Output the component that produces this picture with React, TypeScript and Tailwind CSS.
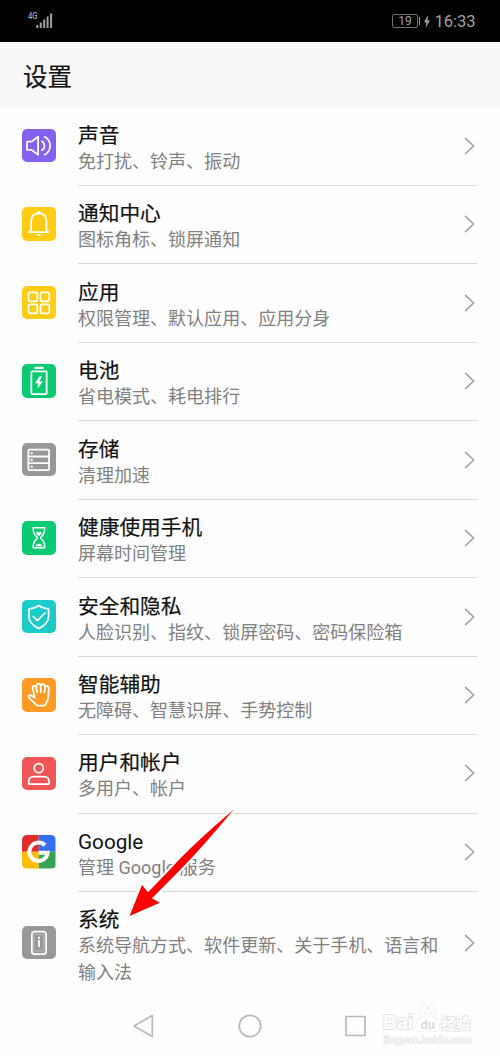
import type { ReactNode } from 'react';

type Setting = {
  title: string;
  detail: ReactNode;
  color: string;
  icon: ReactNode;
};

const settings: Setting[] = [
  {
    title: '声音',
    detail: '免打扰、铃声、振动',
    color: 'bg-[#8561f0]',
    icon: (
      <>
        <path d="M5.500 12.800h4.200l6.600-5v18.400l-6.600-5H5.500Q5 21.200 5 20.500v-7q0-.7.500-.7Z" />
        <path d="M20.200 12.500q1.300.5 2 2 1.200 2.500 0 5-.7 1.500-2 2M23 8q2.500.8 4.300 4 2.500 5 0 10-1.800 3.200-4.300 4" />
      </>
    ),
  },
  {
    title: '通知中心',
    detail: '图标角标、锁屏通知',
    color: 'bg-[#ffcc14]',
    icon: (
      <>
        <path d="M7.300 25.500Q9.200 24.500 9.200 22.500V15q0-8.500 7.800-8.500t7.800 8.500v7.500q0 2 1.900 3ZM15.800 5.600q1.200-1.400 2.400 0" />
        <path d="M14.600 27.500h4.800q-.7 2-2.400 2t-2.400-2Z" fill="white" stroke="none" />
      </>
    ),
  },
  {
    title: '应用',
    detail: '权限管理、默认应用、应用分身',
    color: 'bg-[#ffcc14]',
    icon: (
      <>
        <rect x="6.500" y="6.500" width="9" height="9" rx="2" />
        <rect x="18.700" y="6.500" width="9" height="9" rx="2" />
        <rect x="6.500" y="18.700" width="9" height="9" rx="2" />
        <rect x="18.700" y="18.700" width="9" height="9" rx="2" />
      </>
    ),
  },
  {
    title: '电池',
    detail: '省电模式、耗电排行',
    color: 'bg-[#0acb72]',
    icon: (
      <>
        <rect x="9.500" y="7.500" width="15.500" height="23" rx="0.8" />
        <path d="M13.500 4h7.500" strokeWidth="2.200" />
        <path d="m17.700 12.500-4.500 7h3l-.4 5.500 5.300-7.300H18l2.200-5.200Z" fill="white" stroke="none" />
      </>
    ),
  },
  {
    title: '存储',
    detail: '清理加速',
    color: 'bg-[#989898]',
    icon: (
      <>
        <rect x="6.500" y="6.800" width="21" height="20.700" rx="1" />
        <path d="M6.500 13.700h21M6.500 20.500h21" />
        <path d="M9.500 10.300h.8M9.500 17.100h.8M9.500 24h.8" />
      </>
    ),
  },
  {
    title: '健康使用手机',
    detail: '屏幕时间管理',
    color: 'bg-[#0acb72]',
    icon: (
      <>
        <path d="M11.300 6.800h11.800q0 6.500-3.800 9.300-1 .9 0 1.800 3.800 2.800 3.800 9.300H11.300q0-6.500 3.800-9.300 1-.9 0-1.800-3.800-2.800-3.800-9.300Z" strokeWidth="1.500" />
        <path d="M14.200 11.500q1.500-1.400 3 .3 1.500-1.700 3-.3 0 2.200-3 4-3-1.800-3-4ZM13.300 25.500q3.900-4.600 7.800 0Z" fill="white" stroke="none" />
      </>
    ),
  },
  {
    title: '安全和隐私',
    detail: '人脸识别、指纹、锁屏密码、密码保险箱',
    color: 'bg-[#1bcbc8]',
    icon: (
      <>
        <path d="M17 5.500q4 3.200 9.500 3.500.5 0 .5.800v6.700q0 7.500-10 12.500Q7 24 7 16.500V9.800q0-.8.500-.8Q13 8.700 17 5.500Z" />
        <path d="m11.500 16.800 4.200 4.200 7.500-7.800" />
      </>
    ),
  },
  {
    title: '智能辅助',
    detail: '无障碍、智慧识屏、手势控制',
    color: 'bg-[#ff9a24]',
    icon: (
      <>
        <path d="M12.800 20 10.800 10.500Q10.500 8.300 12.200 8T14.500 9.500Q14.500 6 16.500 5.800T19 8Q19.300 6 21.200 6.200T23.300 9Q24 8 25.600 8.300T27.300 10.500L26.500 20Q26.300 24 23.500 27.500 23 28 22 28H16.500Q15.300 28 14.300 27L7.500 20.500Q6 18.500 7.200 17.500 8.500 16.800 10.300 18.300L12.800 20" />
        <path d="m14.500 9.500.9 5.200M19 8v6.200M23.300 9l-.5 5.700" />
      </>
    ),
  },
  {
    title: '用户和帐户',
    detail: '多用户、帐户',
    color: 'bg-[#f25555]',
    icon: (
      <>
        <circle cx="17" cy="11.300" r="4.600" />
        <path d="M6.800 27v-1.800q0-5.200 5.200-5.200h10q5.500 0 5.500 5.200V27q0 .6-.6.600H7.400q-.6 0-.6-.6Z" />
      </>
    ),
  },
  {
    title: 'Google',
    detail: '管理 Google 服务',
    color: 'bg-white',
    icon: (
      <>
        <g stroke="none">
          <path d="M0 0h17v17H0Z" fill="#e12b2a" />
          <path d="M17 0h17v17H17Z" fill="#3370ef" />
          <path d="M0 17h17v17H0Z" fill="#fdbd08" />
          <path d="M17 17h17v17H17Z" fill="#34a352" />
        </g>
        <path d="M23.300 10.400A9.300 9.300 0 1 0 26 18H17" strokeWidth="4" strokeLinecap="butt" strokeLinejoin="miter" />
      </>
    ),
  },
  {
    title: '系统',
    detail: (
      <>
        系统导航方式、软件更新、关于手机、语言和
        <br />
        输入法
      </>
    ),
    color: 'bg-[#989898]',
    icon: (
      <>
        <rect x="10" y="5.700" width="14.500" height="22.800" rx="3" />
        <path d="M12.500 8.700h9.500v16.600h-9.500Z" strokeWidth="0.600" opacity="0.600" />
        <path d="M17.300 11v2.300M16 15.200h1.300v6.300" strokeLinecap="butt" />
      </>
    ),
  },
];

const StatusBar = () => (
  <div className="flex h-[42px] items-center justify-between bg-black pr-[24.500px] pl-[28px] text-[#a3a3a3]">
    <div className="flex items-start">
      <span className="mt-[-1px] w-[8px] origin-left scale-x-[0.85] text-[9px] leading-[9px] font-medium">4G</span>
      <svg width="17" height="16" viewBox="0 0 17 16" stroke="currentColor" strokeWidth="2">
        <path d="M1.300 12v3M4.800 9.500V15M8.200 6.500V15M11.600 3.500V15M15.100.5V15" />
      </svg>
    </div>
    <div className="flex items-center">
      <div className="flex h-[14px] w-[26px] items-center justify-center rounded-[2px] border border-[#707070] text-[12px] leading-none">
        19
      </div>
      <div className="ml-[1px] h-[8px] w-[1.500px] bg-[#a3a3a3]" />
      <svg className="ml-[4px]" width="6" height="13" viewBox="0 0 6 13" fill="currentColor">
        <path d="M4 0 0 7.200h2.400L1.600 13 6 5.400H3.500Z" />
      </svg>
      <span className="mt-[2px] ml-[4px] text-[16.500px] leading-[20px]">16:33</span>
    </div>
  </div>
);

const SettingRow = ({ setting, last }: { setting: Setting; last: boolean }) => (
  <div className={`flex pr-[22px] pl-[22px] ${last ? 'h-[103px]' : 'h-[78.480px]'}`}>
    <div className="flex w-[56px] shrink-0 items-center pb-[2.200px]">
      <div className={`size-[33.500px] overflow-hidden rounded-[5px] ${setting.color}`}>
        <svg
          className="size-full"
          viewBox="0 0 34 34"
          fill="none"
          stroke="white"
          strokeWidth="1.800"
          strokeLinecap="round"
          strokeLinejoin="round"
        >
          {setting.icon}
        </svg>
      </div>
    </div>
    <div className={`flex flex-1 items-center justify-between ${last ? '' : 'border-b border-[#d9d9d9]'}`}>
      <div className="self-start pt-[15.200px] whitespace-nowrap">
        <h2
          className={`text-[20.700px] leading-[26px] text-[#111] ${
            setting.title === 'Google' ? '' : '[-webkit-text-stroke:0.200px_#111]'
          }`}
        >
          {setting.title}
        </h2>
        <p className="text-[18.030px] leading-[26.500px] text-[#808080]">{setting.detail}</p>
      </div>
      <svg
        className="mr-[3px] mb-[1px] shrink-0"
        width="11"
        height="18"
        viewBox="0 0 11 18"
        fill="none"
        stroke="#a6a6a6"
        strokeWidth="1.700"
      >
        <path d="m1 .8 8.600 8.200L1 17.200" />
      </svg>
    </div>
  </div>
);

const NavBar = () => (
  <nav className="flex h-[61px] items-center pl-[132px]">
    <svg width="236" height="24" viewBox="0 0 236 24" fill="none" stroke="#b8b8b8" strokeWidth="1.700" strokeLinejoin="round">
      <path d="M20.300 1.500v21L2 12Z" />
      <circle cx="118" cy="12" r="10.700" />
      <rect x="214" y="2.500" width="19" height="19" />
    </svg>
  </nav>
);

const Watermark = () => (
  <svg
    className="absolute right-[24px] bottom-[8px] font-['Liberation_Sans','Noto_Sans_CJK_SC',sans-serif]"
    width="94"
    height="46"
    viewBox="0 0 94 46"
    fill="white"
    stroke="#e2e2e2"
    strokeWidth="1"
    paintOrder="stroke"
  >
    <text x="1" y="26.500" fontSize="20" fontWeight="700" textLength="30" lengthAdjust="spacingAndGlyphs" strokeWidth="1.800">Bai</text>
    <ellipse cx="35.500" cy="13.500" rx="3" ry="4" />
    <ellipse cx="41.500" cy="6" rx="3.200" ry="4.500" />
    <ellipse cx="50" cy="6" rx="3.200" ry="4.500" />
    <ellipse cx="56" cy="14" rx="3" ry="4" />
    <path d="M45.500 12c5 0 6 4.500 9 7 5 5 2 11-3 10-4-1-8-1-12 0-6 1-8-5-3-10 4-3 4-7 9-7Z" />
    <text x="38.500" y="26.500" fontSize="12" fontWeight="700" fill="#d8d8d8" stroke="none">du</text>
    <text x="59.500" y="26.500" fontSize="14.500" fontWeight="700" strokeWidth="1.800">经验</text>
    <text x="2" y="40.500" fontSize="9.800" textLength="87" lengthAdjust="spacingAndGlyphs" fill="#fafafa" strokeWidth="1.200">jingyan.baidu.com</text>
  </svg>
);

export default function App() {
  return (
    <div className="relative h-[1056px] w-[500px] overflow-hidden bg-[#fefefe] font-[Roboto,'Noto_Sans_CJK_SC',sans-serif]">
      <StatusBar />
      <header className="flex h-[65.500px] items-center bg-[#f7f7f7] pt-[6px] pl-[23px]">
        <h1 className="text-[24.500px] leading-[32px] text-[#111] [-webkit-text-stroke:0.200px_#111]">设置</h1>
      </header>
      <main>
        {settings.map((setting, idx) => (
          <SettingRow key={setting.title} setting={setting} last={idx === settings.length - 1} />
        ))}
      </main>
      <NavBar />
      <Watermark />

      {/* Arrow pointing at the system entry */}
      <svg className="pointer-events-none absolute top-[804px] left-[124px]" width="116" height="118" viewBox="124 804 116 118">
        <path
          d="M129.500 916 142 885l6 7.200L171 868.500Q191 846 234 809.300 200 850 181 869L152 898.300l7.800 4.400Z"
          fill="#fe0000"
          stroke="white"
          strokeWidth="4"
          strokeLinejoin="round"
          paintOrder="stroke"
        />
      </svg>
    </div>
  );
}
